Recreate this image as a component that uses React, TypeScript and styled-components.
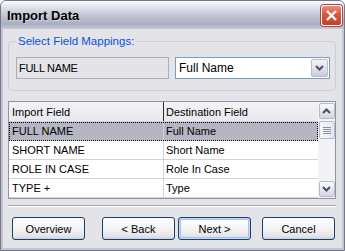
import styled, { createGlobalStyle } from 'styled-components'

const GlobalStyle = createGlobalStyle`
  html, body {
    margin: 0;
    padding: 0;
    background: #ffffff;
  }
  body {
    font-family: "Liberation Sans", Arial, sans-serif;
    font-size: 11px;
    color: #000;
  }
`

const Window = styled.div`
  width: 345px;
  height: 251px;
  box-sizing: border-box;
  border: 1px solid #75768a;
  border-radius: 6px 6px 0 0;
  background: #c4c6d3;
  display: flex;
  flex-direction: column;
  overflow: hidden;
`

const TitleBar = styled.div`
  height: 28px;
  flex: none;
  display: flex;
  align-items: center;
  justify-content: space-between;
  padding: 0 2px 0 6px;
  background: linear-gradient(
    180deg,
    #fdfdfe 0%,
    #eceef4 12%,
    #d2d4e0 35%,
    #b9bccd 62%,
    #abafc3 82%,
    #c6c9d6 100%
  );
`

const Title = styled.span`
  font-size: 13px;
  font-weight: 700;
  color: #000;
  padding-top: 1px;
  text-shadow: 1px 1px 0 rgba(255, 255, 255, 0.4);
`

const CloseButton = styled.div`
  width: 21px;
  height: 21px;
  box-sizing: border-box;
  border: 1px solid #ffffff;
  border-radius: 3px;
  background: linear-gradient(180deg, #eb8f7c 0%, #d8573f 45%, #c2402a 100%);
  box-shadow: 0 0 0 1px #a84b3c;
  display: flex;
  align-items: center;
  justify-content: center;
  margin-top: 1px;
`

const Body = styled.div`
  flex: 1;
  margin: 0 2px 2px 2px;
  background: #e3e3e8;
  padding: 6px 5px 8px 5px;
  display: flex;
  flex-direction: column;
`

const Group = styled.fieldset`
  width: 328px;
  box-sizing: border-box;
  margin: 0;
  padding: 9px 5px 11px 7px;
  border: 1px solid #cdcdd4;
  border-radius: 4px;
  min-inline-size: 0;
`

const Legend = styled.legend`
  color: #0a50e0;
  font-size: 11.5px;
  line-height: 13px;
  padding: 0 2px;
  margin-left: 0;
`

const FieldRow = styled.div`
  display: flex;
  gap: 6px;
`

const ReadOnlyField = styled.div`
  width: 153px;
  height: 22px;
  box-sizing: border-box;
  border: 1px solid #aeaeb6;
  background: #e3e3e8;
  padding-left: 2px;
  display: flex;
  align-items: center;
  letter-spacing: -0.3px;
`

const Combo = styled.div`
  width: 155px;
  height: 22px;
  box-sizing: border-box;
  border: 1px solid #7f9db9;
  background: #ffffff;
  display: flex;
  align-items: center;
  justify-content: space-between;
  padding: 1px;
`

const ComboText = styled.span`
  padding-left: 2px;
  font-size: 12px;
`

const ComboButton = styled.div`
  width: 17px;
  height: 18px;
  box-sizing: border-box;
  border: 1px solid #b9bccb;
  border-radius: 2px;
  background: linear-gradient(180deg, #f4f5f9 0%, #dcdde6 60%, #c9cbd8 100%);
  display: flex;
  align-items: center;
  justify-content: center;
`

const Grid = styled.div`
  width: 328px;
  height: 98px;
  box-sizing: border-box;
  margin-top: 10px;
  border: 1px solid #8e93a5;
  background: #ffffff;
  display: flex;
`

const Table = styled.div`
  flex: 1;
  display: flex;
  flex-direction: column;
`

const HeaderRow = styled.div`
  height: 20px;
  flex: none;
  display: flex;
  background: linear-gradient(180deg, #f3f3f6 0%, #e8e8ee 100%);
  border-bottom: 1px solid #d2d2da;
  box-sizing: border-box;
`

const HeaderCell = styled.div<{ $w?: number }>`
  ${(p) => (p.$w ? `width: ${p.$w}px; flex: none;` : 'flex: 1;')}
  box-sizing: border-box;
  display: flex;
  align-items: center;
  padding-left: ${(p) => (p.$w ? 3 : 2)}px;
  border-right: ${(p) => (p.$w ? '1px solid #2a2a2a' : 'none')};
`

const Row = styled.div<{ $selected?: boolean }>`
  height: 19px;
  flex: none;
  box-sizing: border-box;
  display: flex;
  border-bottom: 1px solid #d4d4d8;
  background: ${(p) => (p.$selected ? '#b5b6c1' : '#ffffff')};
  outline: ${(p) => (p.$selected ? '1px dotted #000' : 'none')};
  outline-offset: -1px;
`

const Cell = styled.div<{ $w?: number }>`
  ${(p) => (p.$w ? `width: ${p.$w}px; flex: none;` : 'flex: 1;')}
  box-sizing: border-box;
  display: flex;
  align-items: center;
  padding-left: ${(p) => (p.$w ? 3 : 2)}px;
  border-right: ${(p) => (p.$w ? '1px solid #d4d4d8' : 'none')};
`

const ScrollBar = styled.div`
  width: 17px;
  flex: none;
  background: #f3f3f7;
  display: flex;
  flex-direction: column;
  align-items: center;
  padding: 1px 0;
  box-sizing: border-box;
`

const ScrollButton = styled.div`
  width: 16px;
  height: 16px;
  box-sizing: border-box;
  border: 1px solid #b7bac9;
  border-radius: 2px;
  background: linear-gradient(180deg, #fbfbfd 0%, #e4e5ec 60%, #d3d5df 100%);
  display: flex;
  align-items: center;
  justify-content: center;
`

const Thumb = styled.div`
  width: 16px;
  height: 18px;
  margin-top: 2px;
  box-sizing: border-box;
  border: 1px solid #b7bac9;
  border-radius: 2px;
  background: linear-gradient(90deg, #f6f6f9 0%, #e6e7ee 100%);
  display: flex;
  flex-direction: column;
  align-items: center;
  justify-content: center;
  gap: 1px;
`

const Grip = styled.span`
  width: 8px;
  height: 1px;
  background: #8d90a3;
`

const Track = styled.div`
  flex: 1;
`

const Separator = styled.div`
  width: 328px;
  height: 2px;
  margin-top: 6px;
  border-top: 1px solid #a7a7b0;
  border-bottom: 1px solid #ffffff;
  box-sizing: border-box;
`

const ButtonRow = styled.div`
  display: flex;
  margin-top: 10px;
  padding-left: 4px;
`

const Button = styled.div<{ $default?: boolean; $gap?: number }>`
  width: 73px;
  height: 23px;
  box-sizing: border-box;
  margin-left: ${(p) => p.$gap ?? 0}px;
  border: 1px solid #1c3e6a;
  border-radius: 3px;
  background: linear-gradient(180deg, #ffffff 0%, #f4f4f6 50%, #e4e4ea 85%, #d4d4dc 100%);
  box-shadow: ${(p) =>
    p.$default
      ? 'inset 0 0 0 1px #c4d8f6, inset 0 0 0 2px #a8c4ee'
      : 'inset 0 -1px 0 #cfcfd8'};
  display: flex;
  align-items: center;
  justify-content: center;
  font-size: 11px;
`

const Chevron = ({ up }: { up?: boolean }) => (
  <svg width="9" height="6" viewBox="0 0 9 6">
    <path
      d={up ? 'M1 5 L4.5 1.5 L8 5' : 'M1 1 L4.5 4.5 L8 1'}
      fill="none"
      stroke="#4a4f66"
      strokeWidth="2"
    />
  </svg>
)

const rows = [
  { from: 'FULL NAME', to: 'Full Name' },
  { from: 'SHORT NAME', to: 'Short Name' },
  { from: 'ROLE IN CASE', to: 'Role In Case' },
  { from: 'TYPE +', to: 'Type' },
]

export default function App() {
  return (
    <>
      <GlobalStyle />
      <Window>
        <TitleBar>
          <Title>Import Data</Title>
          <CloseButton>
            <svg width="13" height="13" viewBox="0 0 13 13">
              <path d="M2 2 L11 11 M11 2 L2 11" stroke="#ffffff" strokeWidth="2.4" />
            </svg>
          </CloseButton>
        </TitleBar>
        <Body>
          <Group>
            <Legend>Select Field Mappings:</Legend>
            <FieldRow>
              <ReadOnlyField>FULL NAME</ReadOnlyField>
              <Combo>
                <ComboText>Full Name</ComboText>
                <ComboButton>
                  <Chevron />
                </ComboButton>
              </Combo>
            </FieldRow>
          </Group>
          <Grid>
            <Table>
              <HeaderRow>
                <HeaderCell $w={155}>Import Field</HeaderCell>
                <HeaderCell>Destination Field</HeaderCell>
              </HeaderRow>
              {rows.map((r, i) => (
                <Row key={r.from} $selected={i === 0}>
                  <Cell $w={155}>{r.from}</Cell>
                  <Cell>{r.to}</Cell>
                </Row>
              ))}
            </Table>
            <ScrollBar>
              <ScrollButton>
                <Chevron up />
              </ScrollButton>
              <Thumb>
                <Grip />
                <Grip />
                <Grip />
                <Grip />
              </Thumb>
              <Track />
              <ScrollButton>
                <Chevron />
              </ScrollButton>
            </ScrollBar>
          </Grid>
          <Separator />
          <ButtonRow>
            <Button>Overview</Button>
            <Button $gap={17}>&lt; Back</Button>
            <Button $default $gap={3}>Next &gt;</Button>
            <Button $gap={11}>Cancel</Button>
          </ButtonRow>
        </Body>
      </Window>
    </>
  )
}
